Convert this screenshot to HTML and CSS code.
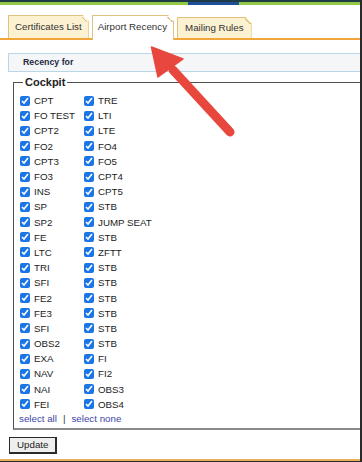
FILE: index.html
```html
<!DOCTYPE html>
<html>
<head>
<meta charset="utf-8">
<link rel="stylesheet" href="styles.css">
</head>
<body>
<div class="frame">
  <div class="topbar">
    <div class="topbar-dark"></div>
    <div class="topbar-green"><span class="seg-blue"></span></div>
  </div>
  <div class="page">
    <div class="tabs">
      <div class="tab tab-cert">Certificates List</div>
      <div class="tab tab-active">Airport Recency</div>
      <div class="tab tab-mail">Mailing Rules</div>
    </div>
    <div class="section-head">Recency for</div>
    <fieldset class="group">
      <legend class="group-title">Cockpit</legend>
      <div class="checks">
        <label class="check"><input type="checkbox" checked><span>CPT</span></label>
        <label class="check"><input type="checkbox" checked><span>TRE</span></label>
        <label class="check"><input type="checkbox" checked><span>FO TEST</span></label>
        <label class="check"><input type="checkbox" checked><span>LTI</span></label>
        <label class="check"><input type="checkbox" checked><span>CPT2</span></label>
        <label class="check"><input type="checkbox" checked><span>LTE</span></label>
        <label class="check"><input type="checkbox" checked><span>FO2</span></label>
        <label class="check"><input type="checkbox" checked><span>FO4</span></label>
        <label class="check"><input type="checkbox" checked><span>CPT3</span></label>
        <label class="check"><input type="checkbox" checked><span>FO5</span></label>
        <label class="check"><input type="checkbox" checked><span>FO3</span></label>
        <label class="check"><input type="checkbox" checked><span>CPT4</span></label>
        <label class="check"><input type="checkbox" checked><span>INS</span></label>
        <label class="check"><input type="checkbox" checked><span>CPT5</span></label>
        <label class="check"><input type="checkbox" checked><span>SP</span></label>
        <label class="check"><input type="checkbox" checked><span>STB</span></label>
        <label class="check"><input type="checkbox" checked><span>SP2</span></label>
        <label class="check"><input type="checkbox" checked><span>JUMP SEAT</span></label>
        <label class="check"><input type="checkbox" checked><span>FE</span></label>
        <label class="check"><input type="checkbox" checked><span>STB</span></label>
        <label class="check"><input type="checkbox" checked><span>LTC</span></label>
        <label class="check"><input type="checkbox" checked><span>ZFTT</span></label>
        <label class="check"><input type="checkbox" checked><span>TRI</span></label>
        <label class="check"><input type="checkbox" checked><span>STB</span></label>
        <label class="check"><input type="checkbox" checked><span>SFI</span></label>
        <label class="check"><input type="checkbox" checked><span>STB</span></label>
        <label class="check"><input type="checkbox" checked><span>FE2</span></label>
        <label class="check"><input type="checkbox" checked><span>STB</span></label>
        <label class="check"><input type="checkbox" checked><span>FE3</span></label>
        <label class="check"><input type="checkbox" checked><span>STB</span></label>
        <label class="check"><input type="checkbox" checked><span>SFI</span></label>
        <label class="check"><input type="checkbox" checked><span>STB</span></label>
        <label class="check"><input type="checkbox" checked><span>OBS2</span></label>
        <label class="check"><input type="checkbox" checked><span>STB</span></label>
        <label class="check"><input type="checkbox" checked><span>EXA</span></label>
        <label class="check"><input type="checkbox" checked><span>FI</span></label>
        <label class="check"><input type="checkbox" checked><span>NAV</span></label>
        <label class="check"><input type="checkbox" checked><span>FI2</span></label>
        <label class="check"><input type="checkbox" checked><span>NAI</span></label>
        <label class="check"><input type="checkbox" checked><span>OBS3</span></label>
        <label class="check"><input type="checkbox" checked><span>FEI</span></label>
        <label class="check"><input type="checkbox" checked><span>OBS4</span></label>
      </div>
      <div class="select-links"><a href="#">select all</a><span class="sep">|</span><a href="#">select none</a></div>
    </fieldset>
    <button class="update" type="button">Update</button>
  </div>
  <svg class="arrow" viewBox="0 0 362 462" width="362" height="462">
    <line x1="173" y1="70" x2="230" y2="132" stroke="#e8473d" stroke-width="9" stroke-linecap="round"/>
    <polygon points="151.5,47 158,77 183,59" fill="#e8473d" stroke="#e8473d" stroke-width="1.5" stroke-linejoin="round"/>
  </svg>
</div>
</body>
</html>
```

FILE: styles.css
```css
html, body {
  margin: 0;
  padding: 0;
  background: #ffffff;
}

body {
  font-family: "Liberation Sans", Arial, sans-serif;
  font-size: 9.75px;
  color: #222;
}

.frame {
  position: relative;
  width: 362px;
  height: 462px;
  box-sizing: border-box;
  border-right: 2px solid #2a2a2a;
  border-bottom: 1px solid #2a2a2a;
  overflow: hidden;
  display: flex;
  flex-direction: column;
  background: #fff;
}

.topbar {
  display: flex;
  flex-direction: column;
}

.topbar-dark {
  height: 2px;
  background: #1f3b45;
}

.topbar-green {
  height: 3px;
  background: #93c947;
  display: flex;
}

.seg-blue {
  margin-left: 188px;
  width: 51px;
  background: #1f4f96;
}

.page {
  flex: 1;
  display: flex;
  flex-direction: column;
  border-bottom: 2px solid #eaae5c;
}

.tabs {
  display: flex;
  align-items: flex-end;
  gap: 2px;
  margin-top: 10px;
  padding-left: 8px;
  height: 23px;
  border-bottom: 2px solid #f0a63a;
}

.tab {
  position: relative;
  box-sizing: border-box;
  padding: 0 6px;
  border: 1px solid #e2c07e;
  border-bottom: none;
  background: #fcf1d1;
  color: #333;
  line-height: 21px;
  height: 23px;
  white-space: nowrap;
  clip-path: polygon(0 0, calc(100% - 6px) 0, 100% 6px, 100% 100%, 0 100%);
}

.tab::after {
  content: "";
  position: absolute;
  top: 0;
  right: 0;
  width: 6px;
  height: 6px;
  background: linear-gradient(to bottom left, transparent 50%, #e2c07e 50%, #e2c07e calc(50% + 1.2px), transparent calc(50% + 1.2px));
}

.tab-active {
  background: #ffffff;
  height: 25px;
  margin-bottom: -2px;
  line-height: 22px;
  padding: 0 6px 0 5px;
  margin-left: 1px;
}

.tab-mail {
  height: 21px;
  line-height: 19px;
  margin-left: 1px;
  padding: 0 7px;
}

.section-head {
  margin-top: 13px;
  margin-left: 8px;
  height: 19px;
  box-sizing: border-box;
  border: 1px solid #b9d5e6;
  border-right: none;
  background: #f5f6f8;
  padding-left: 14px;
  font-weight: bold;
  font-size: 8.8px;
  line-height: 17px;
  color: #1d2a44;
}

.group {
  margin: 4px -3px 0 13px;
  padding: 4px 0 3px 6px;
  border: 1px solid #505050;
  border-bottom: 2px solid #8a8a8a;
  min-width: 0;
}

.group-title {
  font-weight: bold;
  font-size: 11px;
  line-height: 13px;
  color: #222;
  padding: 0 2px;
  margin-left: 3px;
}

.checks {
  display: grid;
  grid-template-columns: 64px auto;
  grid-auto-rows: 15.2px;
}

.check {
  display: flex;
  align-items: center;
  white-space: nowrap;
}

.check input {
  width: 10px;
  height: 10px;
  margin: 0 4px 0 0;
  accent-color: #1a75e6;
}

.select-links {
  height: 12px;
  line-height: 12px;
  margin-top: 1px;
  margin-left: -1px;
}

.select-links a {
  color: #3e45a8;
  text-decoration: none;
}

.sep {
  margin: 0 6px;
  color: #333;
}

.update {
  align-self: flex-start;
  margin: 7px 0 0 9px;
  height: 17px;
  padding: 0 7px;
  font-family: "Liberation Sans", Arial, sans-serif;
  font-size: 9.75px;
  color: #222;
  background: #eeeeee;
  border: 1px solid #2a2a2a;
  border-right-width: 2px;
  border-bottom-width: 2px;
  border-radius: 0;
}

.arrow {
  position: absolute;
  left: 0;
  top: 0;
  pointer-events: none;
}
```
